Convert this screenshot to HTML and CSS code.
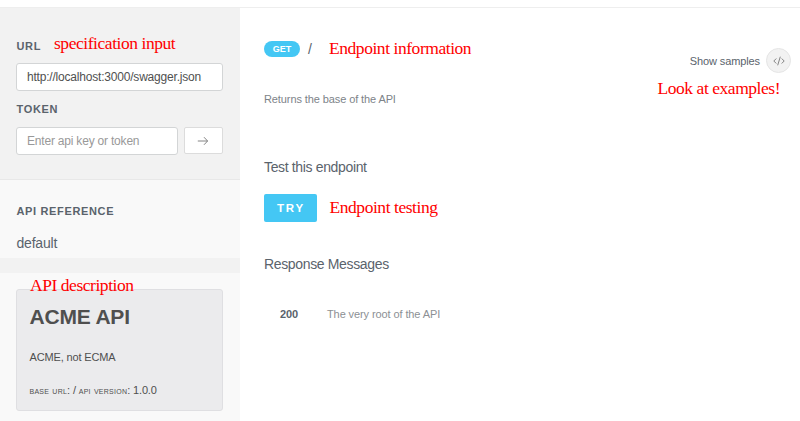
FILE: index.html
```html
<!DOCTYPE html>
<html lang="en">
<head>
<meta charset="utf-8">
<title>ACME API</title>
<link rel="stylesheet" href="styles.css">
</head>
<body>
<header class="topbar"></header>
<div class="layout">
  <aside class="sidebar">
    <form class="source">
      <label class="label" for="url">URL</label>
      <input class="field" id="url" type="text" value="http://localhost:3000/swagger.json">
      <label class="label label-token" for="token">TOKEN</label>
      <div class="token-row">
        <input class="field" id="token" type="text" placeholder="Enter api key or token">
        <button class="go" type="button" aria-label="Load"><svg width="12" height="10" viewBox="0 0 12 10"><path d="M.8 5H10.6M7 1.2 10.6 5 7 8.8"/></svg></button>
      </div>
    </form>
    <nav class="reference">
      <h2 class="label">API REFERENCE</h2>
      <a class="nav-item">default</a>
    </nav>
    <div class="band"></div>
    <section class="about">
      <div class="card">
        <h1 class="card-title">ACME API</h1>
        <p class="card-text">ACME, not ECMA</p>
        <p class="card-meta"><span class="caps">base url</span>: / <span class="caps">api version</span>: 1.0.0</p>
      </div>
    </section>
  </aside>
  <main class="content">
    <div class="endpoint"><span class="method">GET</span><span class="path">/</span></div>
    <p class="summary">Returns the base of the API</p>
    <h3 class="heading">Test this endpoint</h3>
    <button class="try" type="button">TRY</button>
    <h3 class="heading heading-responses">Response Messages</h3>
    <div class="response"><b class="code">200</b><span class="message">The very root of the API</span></div>
  </main>
  <div class="samples">
    <span>Show samples</span>
    <span class="samples-icon"><svg width="12" height="10" viewBox="0 0 12 10"><path d="M3.3 2.5.8 5l2.5 2.5M8.7 2.5 11.2 5 8.7 7.5M7.3.7 4.7 9.3"/></svg></span>
  </div>
</div>
<span class="note note-spec">specification input</span>
<span class="note note-info">Endpoint information</span>
<span class="note note-examples">Look at examples!</span>
<span class="note note-testing">Endpoint testing</span>
<span class="note note-api">API description</span>
</body>
</html>
```
FILE: styles.css
```css
* { box-sizing: border-box; }
body {
  margin: 0;
  height: 421px;
  overflow: hidden;
  position: relative;
  background: #fff;
  color: #5a636c;
  font-family: "Liberation Sans", Arial, sans-serif;
  font-size: 11px;
  letter-spacing: -0.1px;
  white-space: nowrap;
}
h1, h2, h3, p { margin: 0; font-weight: normal; }
svg { display: block; fill: none; stroke: #777; stroke-width: 0.9; }
.topbar { height: 8px; border-bottom: 1px solid #eee; }
.layout { display: flex; height: 413px; }

.sidebar { width: 240px; flex: none; background: #f9f9f9; }
.source { height: 172px; padding: 30px 17px 0 16px; background: #f2f2f2; border-bottom: 1px solid #e8e8e8; }
.label {
  display: block;
  height: 16px;
  padding-left: 0.5px;
  line-height: 16px;
  font-size: 11px;
  font-weight: bold;
  letter-spacing: 0.65px;
}
.field {
  display: block;
  width: 100%;
  height: 28px;
  margin-top: 9px;
  padding: 0 10px;
  border: 1px solid #d3d5d6;
  border-radius: 3px;
  background: #fff;
  color: #505050;
  font: 12px "Liberation Sans", Arial, sans-serif;
  letter-spacing: -0.2px;
}
.field::placeholder { color: #999; opacity: 1; }
.label-token { margin-top: 10px; }
.token-row { display: flex; gap: 6px; margin-top: 10px; }
.token-row .field { margin: 0; width: 162px; }
.go {
  width: 39px;
  height: 27px;
  padding: 0 1px 0 0;
  display: grid;
  place-items: center;
  border: 1px solid #dcdcdc;
  border-radius: 2px;
  background: #fff;
}
.reference { height: 78px; padding: 23px 16px 0; }
.nav-item { display: block; margin-top: 16px; height: 16px; padding-left: 0.5px; line-height: 16px; font-size: 14px; letter-spacing: -0.2px; }
.band { height: 15px; background: #f2f2f2; }
.about { padding: 16px 17px 0 16px; }
.card {
  height: 122px;
  padding: 13px 12.5px;
  border: 1px solid #dfdfe2;
  border-radius: 3px;
  background: #ebebed;
  color: #4f4f4f;
}
.card-title { height: 28px; line-height: 28px; font-size: 21px; font-weight: bold; letter-spacing: -0.2px; }
.card-text { margin-top: 18px; height: 16px; line-height: 16px; letter-spacing: -0.15px; }
.card-meta { margin-top: 17px; height: 16px; line-height: 16px; letter-spacing: -0.15px; }
.caps { font-size: 10.5px; font-variant: small-caps; letter-spacing: 0.25px; }

.content { flex: 1; padding: 33px 0 0 24px; }
.endpoint { display: flex; align-items: center; height: 16px; }
.method {
  width: 36px;
  height: 16px;
  line-height: 16px;
  border-radius: 8px;
  background: #44c7f4;
  color: #fff;
  font-size: 9px;
  font-weight: bold;
  letter-spacing: 0;
  text-align: center;
}
.path { margin-left: 8px; font-size: 14px; line-height: 16px; }
.summary { margin-top: 34px; height: 16px; line-height: 16px; color: #7d8389; }
.heading { margin-top: 52px; height: 16px; line-height: 16px; font-size: 14px; letter-spacing: -0.35px; }
.try {
  display: block;
  width: 53px;
  height: 28px;
  margin-top: 19px;
  padding: 0 0 0 1px;
  border: 0;
  border-radius: 2px;
  background: #44c7f4;
  color: #fff;
  font: bold 11.5px "Liberation Sans", Arial, sans-serif;
  letter-spacing: 1.8px;
}
.heading-responses { margin-top: 34px; }
.response { display: flex; margin-top: 34px; padding-left: 16px; height: 16px; line-height: 16px; }
.code { width: 47px; }
.message { color: #8c9094; }
.samples { display: flex; align-items: center; gap: 6px; height: 25px; margin: 40px 9px 0 0; }
.samples-icon {
  display: grid;
  place-items: center;
  width: 25px;
  height: 25px;
  border: 1px solid #e5e5e5;
  border-radius: 50%;
  background: #f2f2f2;
}

.note {
  position: absolute;
  color: #f00;
  font: 17.5px/20px "Liberation Serif", "Times New Roman", serif;
  letter-spacing: -0.45px;
}
.note-spec { left: 54px; top: 33px; }
.note-info { left: 329px; top: 38px; }
.note-examples { left: 657.5px; top: 78px; }
.note-testing { left: 329.5px; top: 197px; }
.note-api { left: 30px; top: 275px; }
```
